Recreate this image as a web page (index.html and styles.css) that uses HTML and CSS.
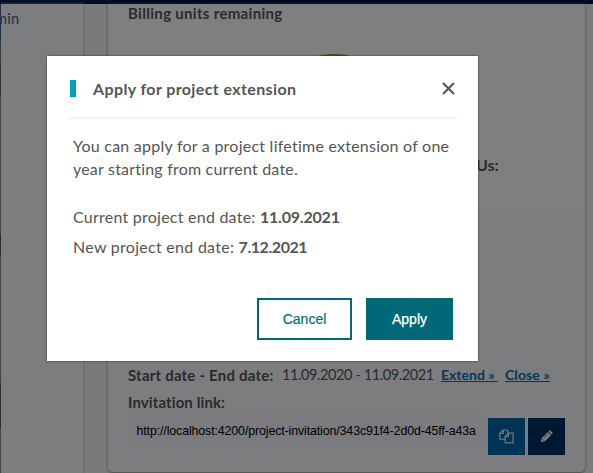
FILE: index.html
```html
<!DOCTYPE html>
<html lang="en">
<head>
<meta charset="utf-8">
<title>Apply for project extension</title>
<link rel="stylesheet" href="styles.css">
</head>
<body>
<div class="page">
  <header class="topbar"></header>
  <div class="layout">
    <div class="strip"></div>
    <aside class="sidebar"><span class="role">min</span></aside>
    <main class="card">
      <section class="usage">
        <h3 class="usage-title">Billing units remaining</h3>
        <div class="gauge"></div>
        <h3 class="units">Us:</h3>
      </section>
      <section class="details">
        <div class="dates">
          <b class="dates-label">Start date - End date:</b>
          <span class="dates-value">11.09.2020 - 11.09.2021</span>
          <a class="link extend" href="#">Extend »&nbsp;</a>
          <a class="link close-link" href="#">Close »</a>
        </div>
        <div class="invite-label"><b>Invitation link:</b></div>
        <div class="invite">
          <div class="url">http://localhost:4200/project-invitation/343c91f4-2d0d-45ff-a43a</div>
          <button class="square copy" aria-label="Copy">
            <svg width="15" height="15" viewBox="0 0 15 15" fill="none" stroke="#e8edf2" stroke-width="1.2" stroke-linejoin="round"><path d="M5.8 10.2H.8V4.3L4.1 1H8.6V4M4.3 1V4.5H1M6.2 13.8V7.3L9.3 4.1H14.1V13.8ZM9.5 4.3V7.5H6.4"/></svg>
          </button>
          <button class="square edit" aria-label="Edit">
            <svg width="13" height="13" viewBox="0 0 14 14"><path fill="#fff" d="M1 13l.7-4.1 6.7-6.7 3.4 3.4-6.7 6.7zM9.2 1.5l.8-.8q.7-.6 1.4 0l1.9 1.9q.6.7 0 1.4l-.8.8z"/><path d="M2.3 9.4l2.3 2.3M4 8.5l4.5-4.5" stroke="#00315f" stroke-width=".8"/></svg>
          </button>
        </div>
      </section>
    </main>
  </div>
</div>
<div class="overlay">
  <div class="modal" role="dialog" aria-modal="true">
    <div class="modal-head">
      <span class="accent"></span>
      <h2 class="modal-title">Apply for project extension</h2>
      <button class="dismiss" aria-label="Close"><svg width="13" height="13" viewBox="0 0 13 13"><path d="M1 1l11 11M12 1L1 12" stroke="#555" stroke-width="2.1"/></svg></button>
    </div>
    <div class="modal-body">
      <p class="intro"><span class="intro-a">You can apply for a project lifetime extension of one</span><br><span class="intro-b">year starting from current date.</span></p>
      <p class="row current">Current project end date: <b class="date-a">11.09.2021</b></p>
      <p class="row next">New project end date: <b class="date-b">7.12.2021</b></p>
    </div>
    <div class="actions">
      <button class="btn cancel">Cancel</button>
      <button class="btn apply">Apply</button>
    </div>
  </div>
</div>
</body>
</html>
```

FILE: styles.css
```css
* { box-sizing: border-box; }
body { margin: 0; overflow: hidden; font-family: Lato, "Liberation Sans", sans-serif; color: #555; }
h2, h3, p { margin: 0; }
button { padding: 0; border: 0; background: none; }
.page { height: 473px; background: #f4f4f4; display: flex; flex-direction: column; overflow: hidden; }
.topbar { height: 4px; background: #001a45; flex: none; }
.layout { display: flex; flex: 1; min-height: 0; }
.strip { width: 1px; background: linear-gradient(#003b83 0 38px, #555 38px 60px, #38331d 60px 91px, #777 91px 230px, #282828 230px 252px, #777 252px 379px, #282828 379px 424px, #777 424px); }
.sidebar { width: 82px; background: #f9fafe; box-shadow: 0 0 3px #aaa; padding-top: 5px; overflow: hidden; }
.role { display: block; margin-left: -6px; color: #306590; font-size: 14.5px; line-height: 20px; letter-spacing: .3px; }
.card { width: 477px; height: 468px; margin-left: 25px; background: #fff; border-radius: 0 0 5px 5px; box-shadow: 0 1px 3px #888; overflow: hidden; white-space: nowrap; }
.usage { height: 208px; padding-left: 20px; display: flex; flex-direction: column; }
.usage-title { margin-top: -1px; font-size: 15px; line-height: 20px; letter-spacing: .31px; }
.gauge { width: 112px; height: 90px; margin: 31px 0 0 150px; border: 14px solid #69ad20; border-radius: 50%; flex: none; }
.units { margin: 11px 0 0 348px; font-size: 16px; line-height: 20px; }
.details { height: 260px; padding: 152px 20px 0; background: #fafafe; }
.dates { display: flex; height: 23px; line-height: 22px; font-size: 15px; }
.dates-label { width: 154px; letter-spacing: .21px; }
.dates-value { width: 159px; font-size: 14.5px; letter-spacing: -.4px; }
.link { color: #0074b8; font-weight: 700; font-size: 14px; text-decoration: underline; }
.extend { width: 64px; }
.close-link { letter-spacing: .1px; }
.invite-label { height: 27px; padding-top: 5px; line-height: 20px; font-size: 15px; letter-spacing: .1px; }
.invite { display: flex; align-items: flex-start; padding-top: 1px; }
.url { flex: none; width: 356px; height: 32px; padding-left: 8.5px; font: 12.4px/32px "Liberation Sans", sans-serif; letter-spacing: -.12px; color: #000; background: #f4f5fe; }
.square { flex: none; width: 37px; height: 37px; margin: 3px 0 0 4px; display: flex; align-items: center; justify-content: center; }
.copy { background: #0068ad; }
.edit { margin-left: 3px; background: #00315f; }
.overlay { position: absolute; inset: 0; background: rgba(0,0,0,.5); }
.modal { width: 431px; height: 305px; margin: 56px 0 0 47px; padding: 14px 22px 0; background: #fff; box-shadow: 0 0 2px #333; white-space: nowrap; }
.modal-head { display: flex; align-items: center; height: 49px; padding: 0 1px 10px; border-bottom: 2px solid #f2f2f2; width: 388px; }
.accent { width: 6px; height: 17px; background: #00a3b8; }
.modal-title { width: 366px; padding-left: 17px; font-size: 16px; line-height: 20px; letter-spacing: .38px; }
.dismiss { display: flex; }
.modal-body { padding: 15px 4px 0; font-size: 16px; letter-spacing: .24px; }
.intro { line-height: 23px; }
.intro-b { letter-spacing: .2px; }
.row { line-height: 30px; }
.current { margin-top: 22px; }
.next { letter-spacing: .28px; }
.date-a { letter-spacing: -.2px; }
.date-b { letter-spacing: -.45px; }
.actions { display: flex; gap: 14px; margin: 36px 0 0 188px; }
.btn { width: 95px; height: 42px; font: 14px "Liberation Sans", sans-serif; border: 2px solid #006877; }
.cancel { color: #007080; background: #fff; -webkit-text-stroke: .2px; }
.apply { width: 87px; color: #fff; background: #006877; -webkit-text-stroke: .25px; }
```
